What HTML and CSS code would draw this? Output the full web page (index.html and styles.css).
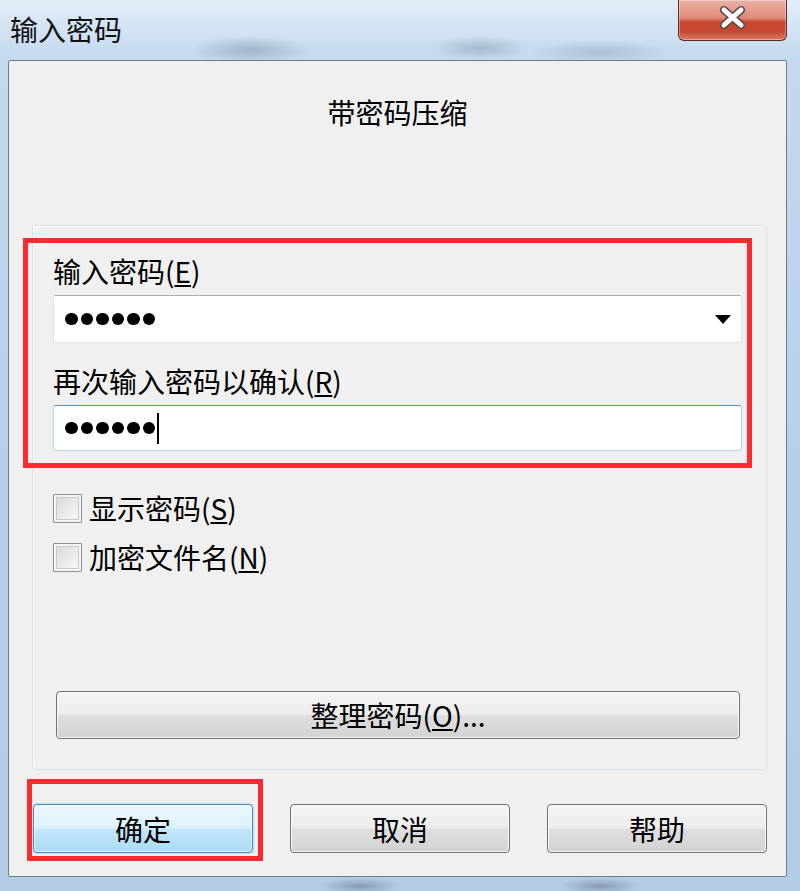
FILE: index.html
```html
<!DOCTYPE html>
<html lang="zh-CN">
<head>
  <meta charset="UTF-8" />
  <title>输入密码</title>
  <link rel="stylesheet" href="styles.css">
</head>
<body>
  <div class="window">
    <div class="titlebar">
      <span class="title">输入密码</span>
      <button class="close" type="button">
        <svg width="27" height="23" viewBox="0 0 27 23">
          <path d="M5 4 L22 19 M22 4 L5 19" stroke="#5a4a48" stroke-width="8" stroke-linecap="round"/>
          <path d="M5 4 L22 19 M22 4 L5 19" stroke="#ffffff" stroke-width="5" stroke-linecap="round"/>
        </svg>
      </button>
    </div>

    <div class="client">
      <h1 class="heading">带密码压缩</h1>

      <div class="group">
        <!-- password fields -->
        <div class="fields marked">
          <div class="label">输入密码(<u>E</u>)</div>
          <div class="field combo">
            <span class="dots"><i></i><i></i><i></i><i></i><i></i><i></i></span>
            <span class="arrow"></span>
          </div>
          <div class="label">再次输入密码以确认(<u>R</u>)</div>
          <div class="field focused">
            <span class="dots"><i></i><i></i><i></i><i></i><i></i><i></i></span>
            <span class="caret"></span>
          </div>
        </div>

        <div class="checks">
          <label class="check"><span class="box"></span><span>显示密码(<u>S</u>)</span></label>
          <label class="check"><span class="box"></span><span>加密文件名(<u>N</u>)</span></label>
        </div>

        <button class="btn wide" type="button">整理密码(<u>O</u>)...</button>
      </div>

      <div class="actions">
        <button class="btn default marked-ok" type="button">确定</button>
        <button class="btn" type="button">取消</button>
        <button class="btn" type="button">帮助</button>
      </div>
    </div>
  </div>
</body>
</html>
```

FILE: styles.css
```css
html, body {
  margin: 0;
  padding: 0;
}
body {
  width: 800px;
  height: 891px;
  overflow: hidden;
  font-family: "Noto Sans CJK SC", "Noto Sans", sans-serif;
  color: #000;
}
.window {
  width: 800px;
  height: 891px;
  box-sizing: border-box;
  background:
    radial-gradient(ellipse 60px 14px at 250px 50px, rgba(90,110,130,0.35), transparent),
    radial-gradient(ellipse 50px 12px at 480px 48px, rgba(90,110,130,0.3), transparent),
    radial-gradient(ellipse 70px 12px at 600px 52px, rgba(90,110,130,0.25), transparent),
    radial-gradient(ellipse 40px 8px at 360px 886px, rgba(60,80,100,0.4), transparent),
    radial-gradient(ellipse 40px 8px at 600px 886px, rgba(60,80,100,0.4), transparent),
    linear-gradient(180deg, #e2eef9 0%, #c5daef 6%, #b9d1ea 40%, #b3cce6 100%);
  display: flex;
  flex-direction: column;
}
.titlebar {
  height: 60px;
  display: flex;
  justify-content: space-between;
  align-items: flex-start;
  flex-shrink: 0;
}
.title {
  margin: 11px 0 0 10px;
  font-size: 28px;
  line-height: 36px;
  color: #111;
}
.close {
  width: 109px;
  height: 41px;
  margin-right: 13px;
  padding: 0;
  border: 1px solid #5a2a22;
  border-top: none;
  border-radius: 0 0 6px 6px;
  background: linear-gradient(180deg, #eab1a6 0%, #df8a78 45%, #c7442c 55%, #c64a32 80%, #de7a62 100%);
  box-shadow: inset 0 0 0 1px rgba(255,255,255,0.35);
  display: flex;
  align-items: center;
  justify-content: center;
}
.close svg {
  margin-top: -6px;
}
.client {
  height: 817px;
  margin: 0 13px 0 8px;
  box-sizing: border-box;
  border: 1px solid #6f7c88;
  border-radius: 2px;
  background: #f0f0f0;
  display: flex;
  flex-direction: column;
}
.heading {
  margin: 33px 0 0;
  font-size: 28px;
  line-height: 36px;
  font-weight: normal;
  text-align: center;
}
.group {
  margin: 95px 0 0 23px;
  width: 735px;
  height: 545px;
  box-sizing: border-box;
  border: 1px solid #d5dfe5;
  border-radius: 4px;
  box-shadow: inset 1px 1px 0 #fff;
  padding: 27px 24px 0 20px;
  display: flex;
  flex-direction: column;
}
.label {
  font-size: 28px;
  line-height: 36px;
  margin-bottom: 6px;
  white-space: nowrap;
}
u {
  text-decoration-thickness: 2px;
  text-underline-offset: 2px;
}
.fields {
  position: relative;
}
.marked::after, .marked-ok::after {
  content: "";
  position: absolute;
  border: 5px solid #fb2b30;
  pointer-events: none;
}
.marked::after {
  left: -30px;
  right: -10px;
  top: -15px;
  bottom: -17px;
}
.field {
  height: 48px;
  box-sizing: border-box;
  border: 1px solid #dfe3e8;
  border-top-color: #abadb3;
  border-radius: 3px;
  background: #fff;
  display: flex;
  align-items: center;
  padding: 0 10px 0 11px;
}
.field.combo {
  margin-bottom: 20px;
}
.field.focused {
  height: 46px;
  border-color: #b6d4ea;
  border-top-color: #5d8fbf;
}
.dots {
  display: flex;
  gap: 3px;
}
.dots i {
  width: 12.5px;
  height: 12.5px;
  border-radius: 50%;
  background: #000;
}
.arrow {
  margin-left: auto;
  width: 0;
  height: 0;
  border-left: 8px solid transparent;
  border-right: 8px solid transparent;
  border-top: 9px solid #000;
}
.caret {
  width: 2px;
  height: 31px;
  background: #000;
  margin-left: 2px;
}
.checks {
  margin-top: 42px;
  display: flex;
  flex-direction: column;
  gap: 19px;
}
.check {
  display: flex;
  align-items: center;
  gap: 7px;
  height: 30px;
  font-size: 28px;
  line-height: 30px;
  white-space: nowrap;
}
.box {
  width: 29px;
  height: 29px;
  box-sizing: border-box;
  border: 1px solid #8e8f8f;
  border-radius: 1px;
  background: linear-gradient(135deg, #d6d6d6 0%, #ececec 60%, #fbfbfb 100%);
  box-shadow: inset 0 0 0 2px #f4f4f4, inset 0 0 0 3px #c9c9c9;
}
.btn {
  font-family: inherit;
  font-size: 28px;
  color: #000;
  height: 49px;
  padding: 0;
  box-sizing: border-box;
  border: 1px solid #707070;
  border-radius: 4px;
  background: linear-gradient(180deg, #f4f4f4 0%, #ececec 48%, #dedede 52%, #d2d2d2 100%);
  box-shadow: inset 0 0 0 1px rgba(255,255,255,0.8);
}
.btn.wide {
  margin: 119px 2px 0 3px;
  height: 48px;
}
.btn.default {
  border-color: #3c8bc4;
  background: linear-gradient(180deg, #eef8fe 0%, #dcf1fc 48%, #c3e7fb 52%, #aadaf5 100%);
  box-shadow: inset 0 0 0 1px rgba(255,255,255,0.7), 0 0 2px #5fb3e6;
}
.actions {
  margin: 34px 0 0 24px;
  display: flex;
  gap: 37px;
}
.actions .btn {
  width: 220px;
}
.marked-ok {
  position: relative;
}
.marked-ok::after {
  left: -7px;
  right: -11px;
  top: -26px;
  bottom: -9px;
}
```
